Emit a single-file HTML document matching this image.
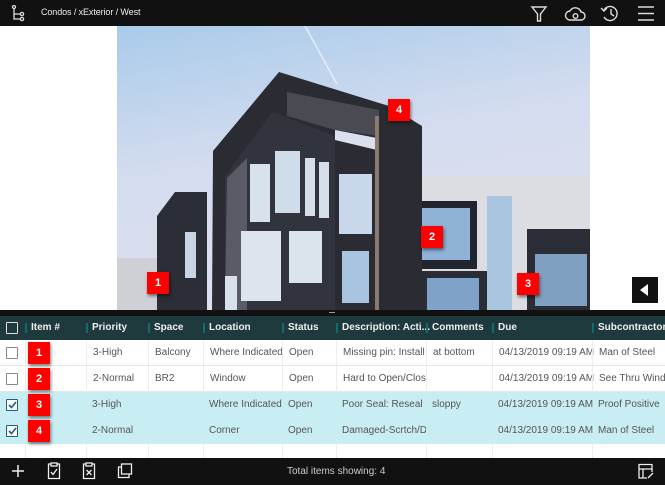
<!DOCTYPE html>
<html><head><meta charset="utf-8"><style>
*{margin:0;padding:0;box-sizing:border-box}
body{width:665px;height:485px;overflow:hidden;background:#fff;font-family:"Liberation Sans",sans-serif;position:relative}
.top{position:absolute;left:0;top:0;width:665px;height:26px;background:#111}
.top .t{position:absolute;left:41px;top:7px;color:#eee;font-size:9px;letter-spacing:-0.1px}
.photo{position:absolute;left:117px;top:26px;width:473px;height:284px}
.mk{position:absolute;width:22px;height:22px;background:#f00;color:#fff;font-weight:bold;font-size:11px;text-align:center;line-height:22px;box-shadow:1px 2px 3px rgba(0,0,0,.5)}
.strip{position:absolute;left:0;top:310px;width:665px;height:6px;background:#111}
.hdr{position:absolute;left:0;top:316px;width:665px;height:24px;background:#1f3a3d}
.h{position:absolute;top:0;height:24px;line-height:24px;color:#eee;font-size:10px;font-weight:bold;padding-left:6px;white-space:nowrap}
.h:before{content:"";position:absolute;left:0;top:7px;width:2px;height:10px;background:#0e6b70}
.row{position:absolute;left:0;width:665px;height:26px;border-bottom:1px solid #e6e6e6}
.c{position:absolute;top:0;height:26px;line-height:26px;font-size:10px;color:#555;padding-left:6px;white-space:nowrap;overflow:hidden;border-left:1px solid #eee}
.cb{position:absolute;left:6px;top:7px;width:12px;height:12px;border:1px solid #888;background:#fff;border-radius:1px}
.cb.on{border-color:#1e5f80;background:#fff}
.foot{position:absolute;left:0;top:458px;width:665px;height:27px;background:#111}
.arrow{position:absolute;left:632px;top:277px;width:26px;height:26px;background:#111}
</style></head><body>
<div class="top">
<svg style="position:absolute;left:11px;top:5px" width="16" height="17" viewBox="0 0 16 17" fill="none" stroke="#ddd" stroke-width="1.3"><circle cx="3" cy="2" r="1.5"/><path d="M3 3.5V14H9M3 9H9"/><circle cx="11" cy="9" r="1.6"/><circle cx="11" cy="14" r="1.6"/></svg>
<div class="t">Condos / xExterior / West</div>
<svg style="position:absolute;left:530px;top:5px" width="18" height="18" viewBox="0 0 18 18" fill="none" stroke="#ddd" stroke-width="1.4"><path d="M2 2H16L10.5 9V16H7.5V9Z"/></svg>
<svg style="position:absolute;left:564px;top:5px" width="22" height="18" viewBox="0 0 22 18" fill="none" stroke="#ddd" stroke-width="1.4"><path d="M6 15H17A4 4 0 0 0 17 7A6 6 0 0 0 6 6A4.5 4.5 0 0 0 6 15Z"/><circle cx="11.5" cy="11" r="2.3"/></svg>
<svg style="position:absolute;left:600px;top:4px" width="20" height="19" viewBox="0 0 20 19" fill="none" stroke="#ddd" stroke-width="1.4"><path d="M4 6A7 7 0 1 1 4 13"/><path d="M1 4L4 7L7 4"/><path d="M11 5V10L14 12"/></svg>
<svg style="position:absolute;left:637px;top:5px" width="18" height="17" viewBox="0 0 18 17" stroke="#ddd" stroke-width="1.6"><path d="M1 2H17M1 8.5H17M1 15H17"/></svg>
</div>
<svg class="photo" viewBox="0 0 473 284" preserveAspectRatio="none">
<defs><linearGradient id="sky" x1="0" y1="0" x2="0.3" y2="1"><stop offset="0" stop-color="#a9cbea"/><stop offset="0.5" stop-color="#d4dcef"/><stop offset="1" stop-color="#dde0ee"/></linearGradient></defs>
<rect width="473" height="284" fill="url(#sky)"/>
<path d="M188 0L220 58" stroke="#e8eef8" stroke-width="1.5"/>
<rect x="293" y="150" width="180" height="134" fill="#dcdde2"/>
<rect x="410" y="203" width="63" height="81" fill="#2a2c36"/>
<rect x="298" y="175" width="62" height="68" fill="#23252e"/>
<rect x="303" y="182" width="50" height="52" fill="#8fb2d6"/>
<rect x="305" y="245" width="65" height="39" fill="#2a2c36"/>
<rect x="310" y="252" width="52" height="32" fill="#7fa3c8"/>
<rect x="370" y="170" width="25" height="114" fill="#aac5df"/>
<rect x="418" y="228" width="52" height="52" fill="#7fa0c0"/>
<rect x="0" y="232" width="45" height="52" fill="#cfd0d6"/>
<path d="M40 190L58 166H90V284H40Z" fill="#2b2d37"/>
<rect x="68" y="206" width="11" height="46" fill="#c8d5e4"/>
<path d="M96 125L162 46L272 80L305 100V284H95Z" fill="#2a2b33"/>
<path d="M170 66L262 84L262 110L218 104L170 90Z" fill="#4a4a52"/>
<path d="M218 104L260 112L260 124L218 114Z" fill="#dce0ee"/>
<path d="M108 150L155 86L218 110V284H108Z" fill="#32343d"/>
<path d="M110 152L130 132V284H108Z" fill="#5a5b66"/>
<rect x="158" y="125" width="25" height="62" fill="#cfdcea"/>
<rect x="188" y="132" width="10" height="58" fill="#d7e0ea"/>
<rect x="202" y="136" width="10" height="56" fill="#d7e0ea"/>
<rect x="222" y="148" width="33" height="60" fill="#c8d8ea"/>
<rect x="133" y="138" width="20" height="58" fill="#d8e2ec"/>
<rect x="124" y="205" width="40" height="70" fill="#dde4ee"/>
<rect x="172" y="205" width="33" height="52" fill="#dbe3ec"/>
<rect x="225" y="225" width="27" height="52" fill="#a9c4e0"/>
<rect x="108" y="250" width="12" height="34" fill="#d8e0ea"/>
<rect x="258" y="90" width="4" height="194" fill="#8a7a6e"/>
</svg>
<div class="mk" style="left:147px;top:272px">1</div>
<div class="mk" style="left:421px;top:226px">2</div>
<div class="mk" style="left:517px;top:273px">3</div>
<div class="mk" style="left:388px;top:99px">4</div>
<div class="arrow"><svg width="26" height="26"><path d="M16 7V19L8 13Z" fill="#fff"/></svg></div>
<div class="strip"><div style="position:absolute;left:329px;top:2px;width:6px;height:1px;background:#999"></div></div>
<div class="hdr">
<div class="cb" style="top:6px;background:transparent;border-color:#ddd"></div>
<div class="h" style="left:25px">Item #</div><div class="h" style="left:86px">Priority</div><div class="h" style="left:148px">Space</div><div class="h" style="left:203px">Location</div><div class="h" style="left:282px">Status</div><div class="h" style="left:336px">Description: Acti...</div><div class="h" style="left:426px">Comments</div><div class="h" style="left:492px">Due</div><div class="h" style="left:592px">Subcontractor</div>
</div>
<div class="row" style="top:340px;background:#fff"><div class="cb"></div><div class="c" style="left:25px;width:61px"></div><div class="c" style="left:86px">3-High</div><div class="c" style="left:148px">Balcony</div><div class="c" style="left:203px">Where Indicated</div><div class="c" style="left:282px">Open</div><div class="c" style="left:336px;width:90px">Missing pin: Install</div><div class="c" style="left:426px;width:66px">at bottom</div><div class="c" style="left:492px">04/13/2019 09:19 AM</div><div class="c" style="left:592px">Man of Steel</div></div>
<div class="row" style="top:366px;background:#fff"><div class="cb"></div><div class="c" style="left:25px;width:61px"></div><div class="c" style="left:86px">2-Normal</div><div class="c" style="left:148px">BR2</div><div class="c" style="left:203px">Window</div><div class="c" style="left:282px">Open</div><div class="c" style="left:336px;width:90px">Hard to Open/Close:</div><div class="c" style="left:426px;width:66px"></div><div class="c" style="left:492px">04/13/2019 09:19 AM</div><div class="c" style="left:592px">See Thru Window</div></div>
<div class="row" style="top:392px;background:#c8eef4;border-color:#c8eef4"><div class="cb on"><svg width="10" height="10" style="position:absolute;left:0;top:0"><path d="M2 5L4.5 7.5L9 2" stroke="#1e5f80" stroke-width="1.6" fill="none"/></svg></div><div class="c" style="left:86px;border:0">3-High</div><div class="c" style="left:203px;border:0">Where Indicated</div><div class="c" style="left:282px;border:0">Open</div><div class="c" style="left:336px;width:90px;border:0">Poor Seal: Reseal</div><div class="c" style="left:426px;border:0">sloppy</div><div class="c" style="left:492px;border:0">04/13/2019 09:19 AM</div><div class="c" style="left:592px;border:0">Proof Positive</div></div>
<div class="row" style="top:418px;background:#c8eef4;border-color:#c8eef4"><div class="cb on"><svg width="10" height="10" style="position:absolute;left:0;top:0"><path d="M2 5L4.5 7.5L9 2" stroke="#1e5f80" stroke-width="1.6" fill="none"/></svg></div><div class="c" style="left:86px;border:0">2-Normal</div><div class="c" style="left:203px;border:0">Corner</div><div class="c" style="left:282px;border:0">Open</div><div class="c" style="left:336px;width:90px;border:0">Damaged-Scrtch/Dirt</div><div class="c" style="left:492px;border:0">04/13/2019 09:19 AM</div><div class="c" style="left:592px;border:0">Man of Steel</div></div>
<div class="row" style="top:444px;height:14px;background:#fff;border:0"><div class="c" style="left:25px;height:14px"></div><div class="c" style="left:86px;height:14px"></div><div class="c" style="left:148px;height:14px"></div><div class="c" style="left:203px;height:14px"></div><div class="c" style="left:282px;height:14px"></div><div class="c" style="left:336px;height:14px"></div><div class="c" style="left:426px;height:14px"></div><div class="c" style="left:492px;height:14px"></div><div class="c" style="left:592px;height:14px"></div></div>
<div class="mk" style="left:28px;top:342px">1</div>
<div class="mk" style="left:28px;top:368px">2</div>
<div class="mk" style="left:28px;top:394px">3</div>
<div class="mk" style="left:28px;top:420px">4</div>
<div class="foot">
<svg style="position:absolute;left:11px;top:6px" width="14" height="14" stroke="#eee" stroke-width="1.5"><path d="M7 1V13M1 7H13"/></svg>
<svg style="position:absolute;left:47px;top:4px" width="14" height="18" fill="none" stroke="#eee" stroke-width="1.3"><path d="M4 2H1.5V16.5H12.5V2H10"/><rect x="4" y="1" width="6" height="3"/><path d="M4 10L6 12.5L10 7"/></svg>
<svg style="position:absolute;left:82px;top:4px" width="14" height="18" fill="none" stroke="#eee" stroke-width="1.3"><path d="M4 2H1.5V16.5H12.5V2H10"/><rect x="4" y="1" width="6" height="3"/><path d="M4.5 8L9.5 13M9.5 8L4.5 13"/></svg>
<svg style="position:absolute;left:117px;top:5px" width="16" height="16" fill="none" stroke="#eee" stroke-width="1.3"><rect x="4.5" y="1" width="10" height="10"/><path d="M4.5 4H1.5V14.5H12V11"/></svg>
<div style="position:absolute;left:287px;top:8px;color:#ccc;font-size:10px">Total items showing: 4</div>
<svg style="position:absolute;left:637px;top:5px" width="18" height="17" fill="none" stroke="#eee" stroke-width="1.3"><path d="M10 15H2V1.5H15V9M2 6H15M6 6V15"/><path d="M11 15L16 10"/></svg>
</div>
</body></html>
